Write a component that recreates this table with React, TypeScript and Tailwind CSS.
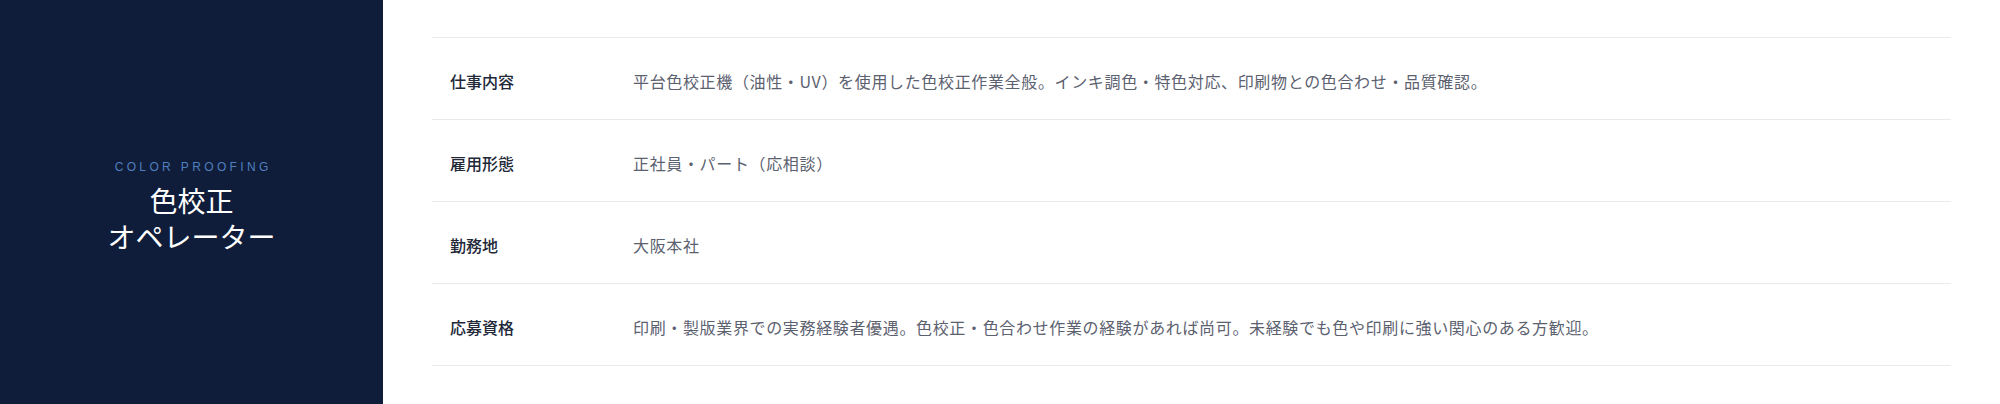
import React from "react";

const rows = [
  { label: "仕事内容", value: "平台色校正機（油性・UV）を使用した色校正作業全般。インキ調色・特色対応、印刷物との色合わせ・品質確認。" },
  { label: "雇用形態", value: "正社員・パート（応相談）" },
  { label: "勤務地", value: "大阪本社" },
  { label: "応募資格", value: "印刷・製版業界での実務経験者優遇。色校正・色合わせ作業の経験があれば尚可。未経験でも色や印刷に強い関心のある方歓迎。" },
];

export default function App() {
  return (
    <div
      className="flex w-[2000px] h-[404px] bg-white"
      style={{ fontFamily: '"Noto Sans CJK JP", "Noto Sans", sans-serif' }}
    >
      <div className="w-[383px] shrink-0 bg-[#0f1d3b] flex flex-col items-center justify-center text-center pt-[10px]">
        <div className="text-[12px] tracking-[0.28em] text-[#4f7fbe] leading-none pl-[0.28em]" style={{ fontFamily: '"Liberation Sans", sans-serif' }}>
          COLOR PROOFING
        </div>
        <div className="mt-[9px] text-[28px] leading-[36px] text-white">
          色校正
          <br />
          オペレーター
        </div>
      </div>
      <div className="flex-1 px-[49px] py-[37px]">
        <div className="border-t border-[#e8eaed]">
          {rows.map((r) => (
            <div key={r.label} className="flex items-center h-[82px] border-b border-[#e8eaed] pt-[4px]">
              <div className="w-[201px] shrink-0 pl-[18px] text-[16px] font-medium text-[#222838]">{r.label}</div>
              <div className="text-[16px] tracking-[0.65px] text-[#5c6170]">{r.value}</div>
            </div>
          ))}
        </div>
      </div>
    </div>
  );
}
